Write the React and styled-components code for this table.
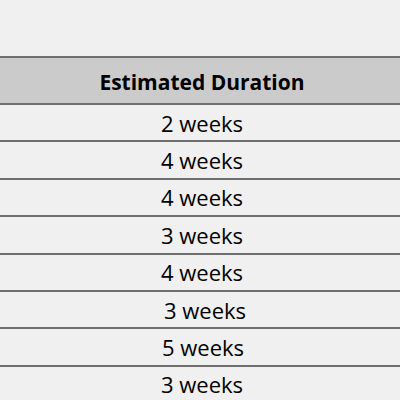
import React from "react";
import styled, { createGlobalStyle } from "styled-components";

const GlobalStyle = createGlobalStyle`
  html, body {
    margin: 0;
    padding: 0;
    background: #f0f0f0;
  }
`;

const Page = styled.div`
  width: 400px;
  height: 400px;
  overflow: hidden;
  background: #f0f0f0;
  padding-top: 56px;
  box-sizing: border-box;
  font-family: "Open Sans", "Noto Sans", sans-serif;
  color: #000;
`;

const Table = styled.div`
  display: flex;
  flex-direction: column;
  width: 100%;
`;

const HeaderCell = styled.div`
  height: 49px;
  box-sizing: border-box;
  display: flex;
  align-items: center;
  justify-content: center;
  background: #cbcbcb;
  border-top: 2px solid #6f6f6f;
  border-bottom: 2px solid #6f6f6f;
  font-size: 21px;
  font-weight: 700;
  padding-top: 2px;
  padding-left: 4px;
`;

const Row = styled.div`
  height: 37.4px;
  box-sizing: border-box;
  display: flex;
  align-items: center;
  justify-content: center;
  border-bottom: 2px solid #6f6f6f;
  font-size: 22px;
  padding-left: ${(p) => 4 + (p.$shift || 0)}px;
`;

const durations = [
  { id: 1, text: "2 weeks" },
  { id: 2, text: "4 weeks" },
  { id: 3, text: "4 weeks" },
  { id: 4, text: "3 weeks" },
  { id: 5, text: "4 weeks" },
  { id: 6, text: "3 weeks", shift: 6 },
  { id: 7, text: "5 weeks", shift: 2 },
  { id: 8, text: "3 weeks" },
];

function App() {
  return (
    <Page>
      <GlobalStyle />
      <Table>
        <HeaderCell>Estimated Duration</HeaderCell>
        {durations.map((d) => (
          <Row key={d.id} $shift={d.shift}>
            {d.text}
          </Row>
        ))}
      </Table>
    </Page>
  );
}

export default App;
